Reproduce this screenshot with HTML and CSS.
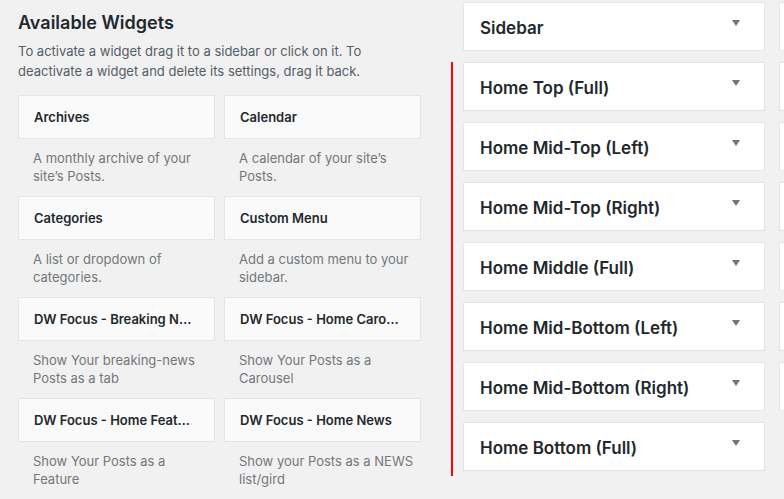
FILE: index.html
```html
<!DOCTYPE html>
<html lang="en">
<head>
  <meta charset="UTF-8" />
  <title>Widgets</title>
  <link rel="stylesheet" href="styles.css">
</head>
<body>
  <div id="page">
    <div id="available">
      <h2>Available Widgets</h2>
      <p class="intro">To activate a widget drag it to a sidebar or click on it. To deactivate a widget and delete its settings, drag it back.</p>

      <div class="widget-grid">
        <div class="widget">
          <div class="widget-title">Archives</div>
          <div class="widget-desc">A monthly archive of your site’s Posts.</div>
        </div>
        <div class="widget">
          <div class="widget-title">Calendar</div>
          <div class="widget-desc">A calendar of your site’s Posts.</div>
        </div>
        <div class="widget">
          <div class="widget-title">Categories</div>
          <div class="widget-desc">A list or dropdown of categories.</div>
        </div>
        <div class="widget">
          <div class="widget-title">Custom Menu</div>
          <div class="widget-desc">Add a custom menu to your sidebar.</div>
        </div>
        <div class="widget">
          <div class="widget-title">DW Focus - Breaking News</div>
          <div class="widget-desc">Show Your breaking-news Posts as a tab</div>
        </div>
        <div class="widget">
          <div class="widget-title">DW Focus - Home Carousel</div>
          <div class="widget-desc">Show Your Posts as a Carousel</div>
        </div>
        <div class="widget">
          <div class="widget-title">DW Focus - Home Feature</div>
          <div class="widget-desc">Show Your Posts as a Feature</div>
        </div>
        <div class="widget">
          <div class="widget-title">DW Focus - Home News</div>
          <div class="widget-desc">Show your Posts as a NEWS list/gird</div>
        </div>
      </div>
    </div>

    <div class="sidebar-col">
      <div class="sidebar-box"><span>Sidebar</span><i class="arrow"></i></div>
      <div class="marked">
        <div class="sidebar-box"><span>Home Top (Full)</span><i class="arrow"></i></div>
        <div class="sidebar-box"><span>Home Mid-Top (Left)</span><i class="arrow"></i></div>
        <div class="sidebar-box"><span>Home Mid-Top (Right)</span><i class="arrow"></i></div>
        <div class="sidebar-box"><span>Home Middle (Full)</span><i class="arrow"></i></div>
        <div class="sidebar-box"><span>Home Mid-Bottom (Left)</span><i class="arrow"></i></div>
        <div class="sidebar-box"><span>Home Mid-Bottom (Right)</span><i class="arrow"></i></div>
        <div class="sidebar-box"><span>Home Bottom (Full)</span><i class="arrow"></i></div>
      </div>
    </div>

    <!-- next column of sidebars, only its left edge is in view -->
    <div class="sidebar-col next">
      <div class="sidebar-box"></div>
      <div class="sidebar-box"></div>
      <div class="sidebar-box"></div>
      <div class="sidebar-box"></div>
      <div class="sidebar-box"></div>
      <div class="sidebar-box"></div>
      <div class="sidebar-box"></div>
    </div>
  </div>
</body>
</html>
```

FILE: styles.css
```css
body {
  margin: 0;
  padding: 0;
  background: #f1f1f1;
  color: #23282d;
  font-family: Inter, "Noto Sans", sans-serif;
  overflow: hidden;
}

#page {
  display: flex;
  align-items: flex-start;
  width: 1200px;
}

#available {
  width: 403px;
  padding-left: 18px;
  flex-shrink: 0;
}

h2 {
  margin: 11px 0 0;
  font-size: 18px;
  font-weight: 600;
  line-height: 24px;
}

.intro {
  margin: 6px 0 0;
  font-size: 13px;
  line-height: 20px;
  color: #555d66;
  width: 360px;
}

.widget-grid {
  display: grid;
  grid-template-columns: 197px 197px;
  column-gap: 9px;
  margin-top: 14px;
}

.widget-title {
  height: 42px;
  line-height: 42px;
  padding: 0 18px 0 15px;
  background: #fafafa;
  border: 1px solid #e5e5e5;
  font-size: 13px;
  font-weight: 600;
  white-space: nowrap;
  overflow: hidden;
  text-overflow: ellipsis;
}

.widget-desc {
  height: 57px;
  box-sizing: border-box;
  padding: 10px 0 0 15px;
  font-size: 13px;
  line-height: 18px;
  color: #72777c;
}

.sidebar-col {
  width: 302px;
  flex-shrink: 0;
  padding-top: 2px;
}

#available + .sidebar-col {
  margin-left: 42px;
}

.sidebar-col.next {
  margin-left: 14px;
}

.marked {
  margin-left: -12px;
  padding: 0 0 5px 10px;
  border-left: 2px solid #f00;
}

.sidebar-box {
  display: flex;
  align-items: center;
  justify-content: space-between;
  height: 47px;
  margin-bottom: 11px;
  padding: 0 24px 0 16px;
  background: #fff;
  border: 1px solid #e5e5e5;
  font-size: 17px;
  font-weight: 600;
}

.marked .sidebar-box:last-child {
  margin-bottom: 0;
}

.sidebar-box span {
  margin-top: 2px;
}

.arrow {
  width: 0;
  height: 0;
  margin-bottom: 8px;
  border-left: 4px solid transparent;
  border-right: 4px solid transparent;
  border-top: 6px solid #72777c;
}
```
